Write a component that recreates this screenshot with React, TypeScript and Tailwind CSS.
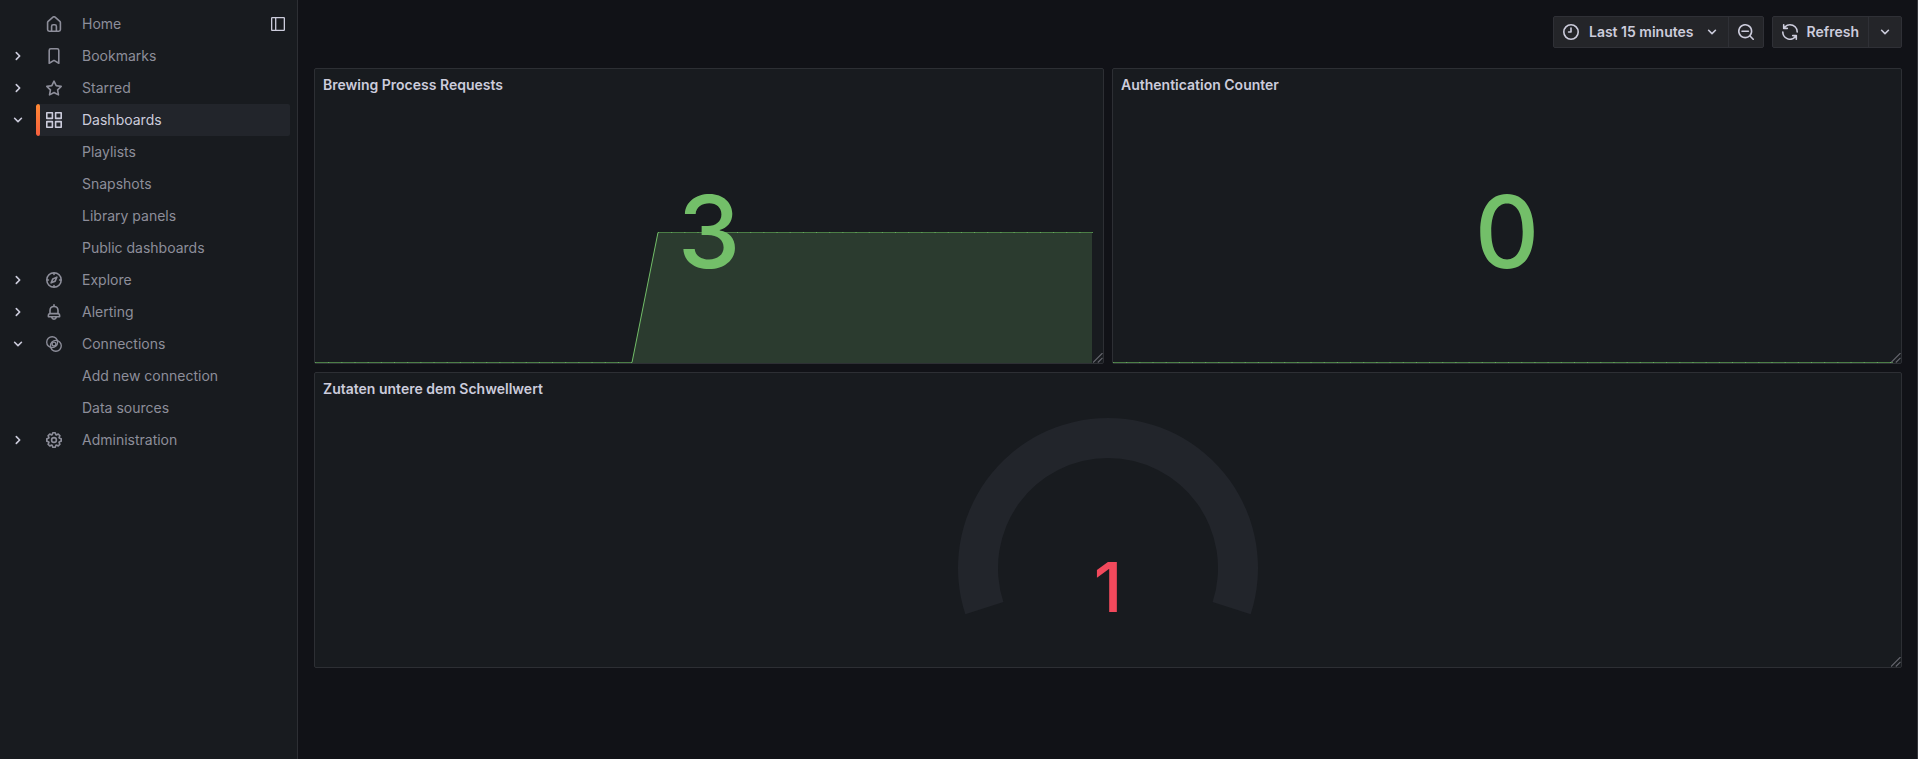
import { useId, type ReactNode } from "react";

const paths = {
  home: "M20,8h0L14,2.74a3,3,0,0,0-4,0L4,8a3,3,0,0,0-1,2.26V19a3,3,0,0,0,3,3H18a3,3,0,0,0,3-3V10.25A3,3,0,0,0,20,8ZM14,20H10V15a1,1,0,0,1,1-1h2a1,1,0,0,1,1,1Zm5-1a1,1,0,0,1-1,1H16V15a3,3,0,0,0-3-3H11a3,3,0,0,0-3,3v5H6a1,1,0,0,1-1-1V10.25a1,1,0,0,1,.34-.75l6-5.25a1,1,0,0,1,1.32,0l6,5.25a1,1,0,0,1,.34.75Z",
  bookmark:
    "M16,2H8A3,3,0,0,0,5,5V21a1,1,0,0,0,.5.87,1,1,0,0,0,1,0L12,18.69l5.5,3.18A1,1,0,0,0,18,22a1,1,0,0,0,.5-.13A1,1,0,0,0,19,21V5A3,3,0,0,0,16,2Zm1,17.27-4.5-2.6a1,1,0,0,0-1,0L7,19.27V5A1,1,0,0,1,8,4h8a1,1,0,0,1,1,1Z",
  star: "M22,9.67A1,1,0,0,0,21.14,9l-5.69-.83L12.9,3a1,1,0,0,0-1.8,0L8.55,8.16,2.86,9a1,1,0,0,0-.81.68,1,1,0,0,0,.25,1l4.13,4-1,5.68A1,1,0,0,0,6.9,21.44L12,18.77l5.1,2.67a.93.93,0,0,0,.46.12,1,1,0,0,0,.59-.19,1,1,0,0,0,.4-1l-1-5.68,4.13-4A1,1,0,0,0,22,9.67Zm-6.15,4a1,1,0,0,0-.29.88l.72,4.2-3.76-2a1.06,1.06,0,0,0-.94,0l-3.76,2,.72-4.2a1,1,0,0,0-.29-.88l-3-3,4.21-.61a1,1,0,0,0,.76-.55L12,5.7l1.88,3.82a1,1,0,0,0,.76.55l4.21.61Z",
  apps: "M10,13H3a1,1,0,0,0-1,1v7a1,1,0,0,0,1,1h7a1,1,0,0,0,1-1V14A1,1,0,0,0,10,13ZM9,20H4V15H9ZM21,2H14a1,1,0,0,0-1,1v7a1,1,0,0,0,1,1h7a1,1,0,0,0,1-1V3A1,1,0,0,0,21,2ZM20,9H15V4h5Zm1,4H14a1,1,0,0,0-1,1v7a1,1,0,0,0,1,1h7a1,1,0,0,0,1-1V14A1,1,0,0,0,21,13Zm-1,7H15V15h5ZM10,2H3A1,1,0,0,0,2,3v7a1,1,0,0,0,1,1h7a1,1,0,0,0,1-1V3A1,1,0,0,0,10,2ZM9,9H4V4H9Z",
  compass:
    "M12,2A10,10,0,1,0,22,12,10,10,0,0,0,12,2Zm1,17.93V19a1,1,0,0,0-2,0v.93A8,8,0,0,1,4.07,13H5a1,1,0,0,0,0-2H4.07A8,8,0,0,1,11,4.07V5a1,1,0,0,0,2,0V4.07A8,8,0,0,1,19.93,11H19a1,1,0,0,0,0,2h.93A8,8,0,0,1,13,19.93ZM15.14,7.55l-5,2.12a1,1,0,0,0-.52.52l-2.12,5a1,1,0,0,0,.21,1.1,1,1,0,0,0,.7.29.93.93,0,0,0,.4-.08l5-2.12a1,1,0,0,0,.52-.52l2.12-5a1,1,0,0,0-1.31-1.31Zm-2.49,5.1-2.28,1,1-2.28,2.28-1Z",
  bell: "M18,13.18V10a6,6,0,0,0-5-5.91V3a1,1,0,0,0-2,0V4.09A6,6,0,0,0,6,10v3.18A3,3,0,0,0,4,16v2a1,1,0,0,0,1,1H8.14a4,4,0,0,0,7.72,0H19a1,1,0,0,0,1-1V16A3,3,0,0,0,18,13.18ZM8,10a4,4,0,0,1,8,0v3H8Zm4,10a2,2,0,0,1-1.72-1h3.44A2,2,0,0,1,12,20Zm6-3H6V16a1,1,0,0,1,1-1H17a1,1,0,0,1,1,1Z",
  cog: "M21.32,9.55l-1.89-.63.89-1.78A1,1,0,0,0,20.13,6L18,3.87a1,1,0,0,0-1.15-.19l-1.78.89-.63-1.89A1,1,0,0,0,13.5,2h-3a1,1,0,0,0-.95.68L8.92,4.57,7.14,3.68A1,1,0,0,0,6,3.87L3.87,6a1,1,0,0,0-.19,1.15l.89,1.78-1.89.63A1,1,0,0,0,2,10.5v3a1,1,0,0,0,.68.95l1.89.63-.89,1.78A1,1,0,0,0,3.87,18L6,20.13a1,1,0,0,0,1.15.19l1.78-.89.63,1.89a1,1,0,0,0,.95.68h3a1,1,0,0,0,.95-.68l.63-1.89,1.78.89A1,1,0,0,0,18,20.13L20.13,18a1,1,0,0,0,.19-1.15l-.89-1.78,1.89-.63A1,1,0,0,0,22,13.5v-3A1,1,0,0,0,21.32,9.55ZM20,12.78l-1.2.4A2,2,0,0,0,17.64,16l.57,1.14-1.1,1.1L16,17.64a2,2,0,0,0-2.79,1.16l-.4,1.2H11.22l-.4-1.2A2,2,0,0,0,8,17.64l-1.14.57-1.1-1.1L6.36,16A2,2,0,0,0,5.2,13.18L4,12.78V11.22l1.2-.4A2,2,0,0,0,6.36,8L5.79,6.89l1.1-1.1L8,6.36A2,2,0,0,0,10.82,5.2l.4-1.2h1.56l.4,1.2A2,2,0,0,0,16,6.36l1.14-.57,1.1,1.1L17.64,8a2,2,0,0,0,1.16,2.79l1.2.4ZM12,8a4,4,0,1,0,4,4A4,4,0,0,0,12,8Zm0,6a2,2,0,1,1,2-2A2,2,0,0,1,12,14Z",
  clock: "M12,2A10,10,0,1,0,22,12,10,10,0,0,0,12,2Zm0,18a8,8,0,1,1,8-8A8,8,0,0,1,12,20ZM12,6a1,1,0,0,0-1,1v4H9a1,1,0,0,0,0,2h3a1,1,0,0,0,1-1V7A1,1,0,0,0,12,6Z",
  zoomOut:
    "M21.71,20.29,18,16.61A9,9,0,1,0,16.61,18l3.68,3.68a1,1,0,0,0,1.42,0A1,1,0,0,0,21.71,20.29ZM11,18a7,7,0,1,1,7-7A7,7,0,0,1,11,18Zm4-8H7a1,1,0,0,0,0,2h8a1,1,0,0,0,0-2Z",
  sync: "M19.91,15.51H15.38a1,1,0,0,0,0,2h2.4A8,8,0,0,1,4,12a1,1,0,1,0-2,0,10,10,0,0,0,16.88,7.23V21a1,1,0,0,0,2,0V16.5A1,1,0,0,0,19.91,15.51ZM12,2A10,10,0,0,0,5.12,4.77V3a1,1,0,0,0-2,0V7.5a1,1,0,0,0,1,1h4.5a1,1,0,0,0,0-2H6.22A8,8,0,0,1,20,12a1,1,0,0,0,2,0A10,10,0,0,0,12,2Z",
  angleDown:
    "M17,9.17a1,1,0,0,0-1.41,0L12,12.71,8.46,9.17a1,1,0,0,0-1.41,0,1,1,0,0,0,0,1.42l4.24,4.24a1,1,0,0,0,1.42,0L17,10.59A1,1,0,0,0,17,9.17Z",
  angleRight:
    "M14.83,11.29,10.59,7.05a1,1,0,0,0-1.42,0,1,1,0,0,0,0,1.41L12.71,12,9.17,15.54a1,1,0,0,0,0,1.41,1,1,0,0,0,.71.29,1,1,0,0,0,.71-.29l4.24-4.24A1,1,0,0,0,14.83,11.29Z",
};

type IconName = keyof typeof paths | "connections";

function Icon({ name }: { name: IconName }) {
  if (name === "connections") {
    return (
      <svg viewBox="2 2 20 20" className="size-4 shrink-0" fill="none" stroke="currentColor" strokeWidth="1.7" aria-hidden="true">
        <circle cx="9.7" cy="9.7" r="6.8" />
        <circle cx="14.3" cy="14.3" r="6.8" />
        <circle cx="12" cy="12" r="2.4" />
      </svg>
    );
  }
  return (
    <svg viewBox="2 2 20 20" className="size-4 shrink-0" fill="currentColor" aria-hidden="true">
      <path d={paths[name]} />
    </svg>
  );
}

type NavItem = {
  label: string;
  icon: IconName;
  toggle?: "open" | "closed";
  active?: boolean;
  children?: string[];
};

const nav: NavItem[] = [
  { label: "Home", icon: "home" },
  { label: "Bookmarks", icon: "bookmark", toggle: "closed" },
  { label: "Starred", icon: "star", toggle: "closed" },
  {
    label: "Dashboards",
    icon: "apps",
    toggle: "open",
    active: true,
    children: ["Playlists", "Snapshots", "Library panels", "Public dashboards"],
  },
  { label: "Explore", icon: "compass", toggle: "closed" },
  { label: "Alerting", icon: "bell", toggle: "closed" },
  { label: "Connections", icon: "connections", toggle: "open", children: ["Add new connection", "Data sources"] },
  { label: "Administration", icon: "cog", toggle: "closed" },
];

function NavEntry({ item }: { item: NavItem }) {
  return (
    <li>
      <div className="flex h-8 items-center">
        <div className="flex w-9 shrink-0 justify-center">
          {item.toggle && (
            <button
              type="button"
              aria-expanded={item.toggle === "open"}
              aria-label={`Toggle ${item.label}`}
              className="text-[#ccccdc]"
            >
              <Icon name={item.toggle === "open" ? "angleDown" : "angleRight"} />
            </button>
          )}
        </div>
        <a
          href="#"
          aria-current={item.active ? "page" : undefined}
          className={
            item.active
              ? "flex h-8 min-w-0 flex-1 items-center overflow-hidden rounded-xs bg-[#22252b] text-[#ccccdc]"
              : "flex h-8 min-w-0 flex-1 items-center text-[#8d8e9a]"
          }
        >
          <span
            className={
              item.active
                ? "h-8 w-1 rounded-xs bg-linear-to-b from-[#ff8833] to-[#f55f3e]"
                : "h-8 w-1"
            }
          />
          <span className="flex w-[42px] pl-1.5">
            <Icon name={item.icon} />
          </span>
          {item.label}
        </a>
        {item.label === "Home" && (
          <button type="button" aria-label="Undock menu" className="text-[#ccccdc]">
            <svg viewBox="0 0 16 16" className="mr-1 size-4" fill="none" stroke="currentColor" strokeWidth="1.3" aria-hidden="true">
              <rect x="1.65" y="1.65" width="12.7" height="12.7" rx="0.6" />
              <path d="M5.7 1.65v12.7" />
            </svg>
          </button>
        )}
      </div>
      {item.children && (
        <ul>
          {item.children.map((child) => (
            <li key={child}>
              <a href="#" className="flex h-8 items-center pl-[82px] text-[#8d8e9a]">
                {child}
              </a>
            </li>
          ))}
        </ul>
      )}
    </li>
  );
}

function Panel({ title, className, children }: { title: string; className?: string; children: ReactNode }) {
  const id = useId();
  return (
    <section
      aria-labelledby={id}
      className={`relative flex h-74 flex-col overflow-hidden rounded-xs border border-[#2d2f34] bg-[#181b1f] ${className ?? ""}`}
    >
      <h2 id={id} className="flex h-8 shrink-0 items-center px-2 font-semibold text-[#ccccdc]">
        {title}
      </h2>
      {children}
      <svg
        viewBox="0 0 10 10"
        className="absolute right-0 bottom-0 size-2.5"
        stroke="#65666e"
        strokeWidth="1.1"
        aria-hidden="true"
      >
        <path d="M0 9.5L9.5 0M4.8 9.5L9.5 4.8" />
      </svg>
    </section>
  );
}

function Sparkline({ flat, rise, area }: { flat: string; rise?: string; area?: string }) {
  return (
    <svg
      viewBox="0 0 788 294"
      preserveAspectRatio="none"
      className="absolute inset-0 size-full"
      fill="none"
      aria-hidden="true"
    >
      {area && <path d={area} fill="#2b3b2f" />}
      <path d={flat} stroke="#4b7d46" vectorEffect="non-scaling-stroke" />
      <path d={flat} stroke="#69ad60" strokeDasharray="1 12.17" vectorEffect="non-scaling-stroke" />
      {rise && <path d={rise} stroke="#73bf69" vectorEffect="non-scaling-stroke" />}
    </svg>
  );
}

function StatValue({ children }: { children: ReactNode }) {
  return (
    <div className="relative flex flex-1 items-center justify-center text-[100px] leading-none font-medium text-[#73bf69]">
      {children}
    </div>
  );
}

export default function App() {
  return (
    <div className="flex min-h-screen border-r border-[#36373c] bg-[#111217] font-['Inter',sans-serif] text-sm text-[#ccccdc] antialiased">
      <nav aria-label="Main" className="w-[298px] shrink-0 border-r border-[#2d2f34] bg-[#181b1f] py-2 pr-[7px]">
        <ul>
          {nav.map((item) => (
            <NavEntry key={item.label} item={item} />
          ))}
        </ul>
      </nav>

      <main className="min-w-0 flex-1 pt-4 pr-[15px] pl-4">
        <div className="flex justify-end gap-2">
          <div className="flex h-8 rounded-xs border border-[#2f3036] bg-[#242529] font-semibold">
            <button type="button" className="flex items-center gap-2.5 pr-2 pl-[9px]">
              <Icon name="clock" />
              <span>Last 15 minutes</span>
              <Icon name="angleDown" />
            </button>
            <button
              type="button"
              aria-label="Zoom out time range"
              className="flex items-center border-l border-[#2f3036] px-[9px]"
            >
              <Icon name="zoomOut" />
            </button>
          </div>
          <div className="flex h-8 rounded-xs border border-[#2f3036] bg-[#242529] font-semibold">
            <button type="button" className="flex items-center gap-[9px] px-[9px]">
              <Icon name="sync" />
              Refresh
            </button>
            <button
              type="button"
              aria-label="Auto refresh interval"
              className="flex items-center border-l border-[#2f3036] px-2"
            >
              <Icon name="angleDown" />
            </button>
          </div>
        </div>

        <div className="mt-5 grid grid-cols-2 gap-2">
          <Panel title="Brewing Process Requests">
            <Sparkline
              flat="M0 293.5H317M343 163.5H778"
              rise="M317 293.5L343 163.5"
              area="M317 294L343 163.5H777V294Z"
            />
            <StatValue>3</StatValue>
          </Panel>
          <Panel title="Authentication Counter">
            <Sparkline flat="M0 293.5H780" />
            <StatValue>0</StatValue>
          </Panel>
          <Panel title="Zutaten untere dem Schwellwert" className="col-span-2">
            <div className="flex justify-center pt-[13px]">
              <svg viewBox="0 0 300 230" className="h-[230px] w-[300px]" role="img" aria-label="Gauge value 1">
                <path
                  d="M7.34 196.35A150 150 0 1 1 292.66 196.35L254.62 183.99A110 110 0 1 0 45.38 183.99Z"
                  fill="#22252b"
                />
                <text
                  x="150"
                  y="194"
                  textAnchor="middle"
                  className="fill-[#f2495c] text-[69px] font-medium"
                >
                  1
                </text>
              </svg>
            </div>
          </Panel>
        </div>
      </main>
    </div>
  );
}
